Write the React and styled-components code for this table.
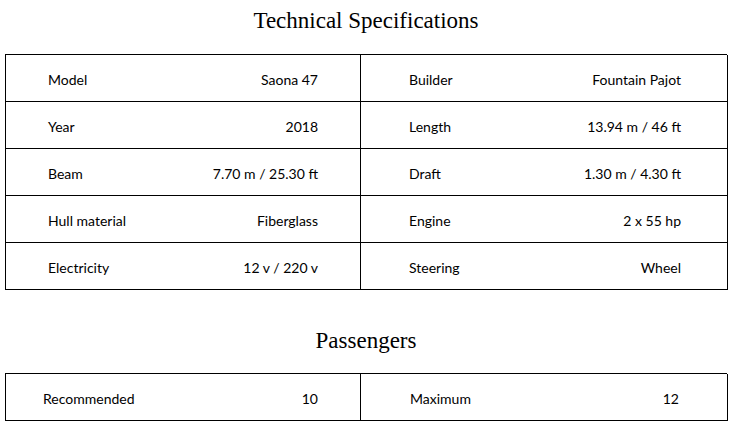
import React from "react";
import styled, { createGlobalStyle } from "styled-components";

const Global = createGlobalStyle`
  html, body { margin: 0; padding: 0; background: #fff; }
  body { font-family: "Lato", "Liberation Sans", sans-serif; color: #000; }
`;

const Page = styled.div`
  width: 734px;
  padding: 6px 0 0 5px;
  box-sizing: border-box;
`;

const Title = styled.h2`
  margin: 0;
  width: 722px;
  text-align: center;
  font-family: "Liberation Serif", "Times New Roman", serif;
  font-weight: 400;
  font-size: 23px;
  line-height: 30px;
  color: #000;
`;

const Table = styled.div`
  margin-top: ${(p) => p.$top}px;
  width: 722px;
  box-sizing: border-box;
  display: grid;
  grid-template-columns: 355px 367px;
  border-top: 1px solid #000;
  border-left: 1px solid #000;
`;

const Half = styled.div`
  display: flex;
  align-items: center;
  justify-content: space-between;
  height: 47px;
  box-sizing: border-box;
  border-right: 1px solid #000;
  border-bottom: 1px solid #000;
  padding: 3px ${(p) => p.$pr}px 0 ${(p) => p.$pl}px;
  font-size: 14px;
`;

const Label = styled.span``;
const Value = styled.span`
  text-align: right;
`;

const specs = [
  ["Model", "Saona 47", "Builder", "Fountain Pajot"],
  ["Year", "2018", "Length", "13.94 m / 46 ft"],
  ["Beam", "7.70 m / 25.30 ft", "Draft", "1.30 m / 4.30 ft"],
  ["Hull material", "Fiberglass", "Engine", "2 x 55 hp"],
  ["Electricity", "12 v / 220 v", "Steering", "Wheel"],
];

export default function App() {
  return (
    <Page>
      <Global />
      <Title>Technical Specifications</Title>
      <Table $top={18}>
        {specs.map(([a, b, c, d]) => (
          <React.Fragment key={a}>
            <Half $pl={42} $pr={42}>
              <Label>{a}</Label>
              <Value>{b}</Value>
            </Half>
            <Half $pl={48} $pr={46}>
              <Label>{c}</Label>
              <Value>{d}</Value>
            </Half>
          </React.Fragment>
        ))}
      </Table>
      <Title style={{ marginTop: 36 }}>Passengers</Title>
      <Table $top={17}>
        <Half $pl={37} $pr={42}>
          <Label>Recommended</Label>
          <Value>10</Value>
        </Half>
        <Half $pl={49} $pr={48}>
          <Label>Maximum</Label>
          <Value>12</Value>
        </Half>
      </Table>
    </Page>
  );
}
